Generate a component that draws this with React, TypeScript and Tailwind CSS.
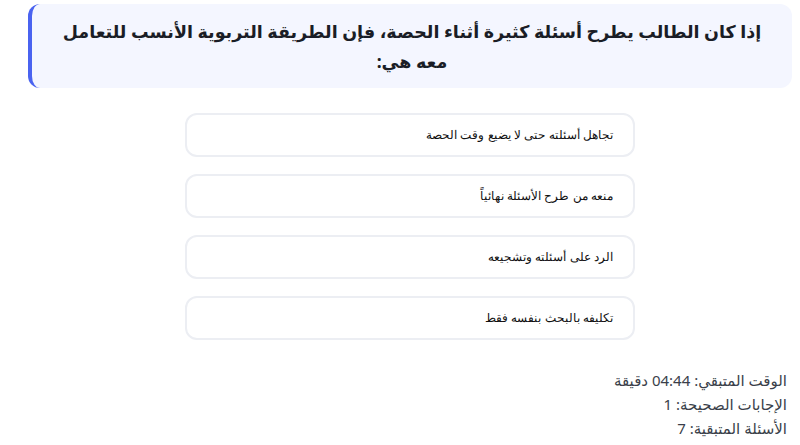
import React from 'react';

const options = [
  'تجاهل أسئلته حتى لا يضيع وقت الحصة',
  'منعه من طرح الأسئلة نهائياً',
  'الرد على أسئلته وتشجيعه',
  'تكليفه بالبحث بنفسه فقط',
];

export default function App() {
  return (
    <div dir="rtl" className="w-[800px] h-[445px] bg-white overflow-hidden">
      <div className="ml-[28px] mr-[8px] pt-[4px]">
        {/* Question card */}
        <div className="rounded-xl border-l-4 border-[#4a63f0] bg-[#f4f6ff] py-[12px] px-6 text-center">
          <h2 className="text-[17.5px] leading-[30px] font-bold text-[#1a1d26] [font-family:'Noto_Sans','DejaVu_Sans',sans-serif]">
            إذا كان الطالب يطرح أسئلة كثيرة أثناء الحصة، فإن الطريقة التربوية الأنسب للتعامل معه هي:
          </h2>
        </div>

        {/* Options */}
        <div className="mt-[25px] flex flex-col items-center gap-[17px]">
          {options.map((opt) => (
            <button
              key={opt}
              className="w-[450px] h-[44px] rounded-xl border-2 border-[#eceef3] bg-white px-5 text-right text-[12px] text-[#111] [font-family:'Liberation_Sans',Arial,sans-serif]"
            >
              {opt}
            </button>
          ))}
        </div>

        {/* Stats */}
        <div className="mt-[28px] pr-[5px] text-[15px] leading-[24px] text-[#3a3f4a] [font-family:'Noto_Sans','DejaVu_Sans',sans-serif]">
          <p>الوقت المتبقي: 04:44 دقيقة</p>
          <p>الإجابات الصحيحة: 1</p>
          <p>الأسئلة المتبقية: 7</p>
        </div>
      </div>
    </div>
  );
}
